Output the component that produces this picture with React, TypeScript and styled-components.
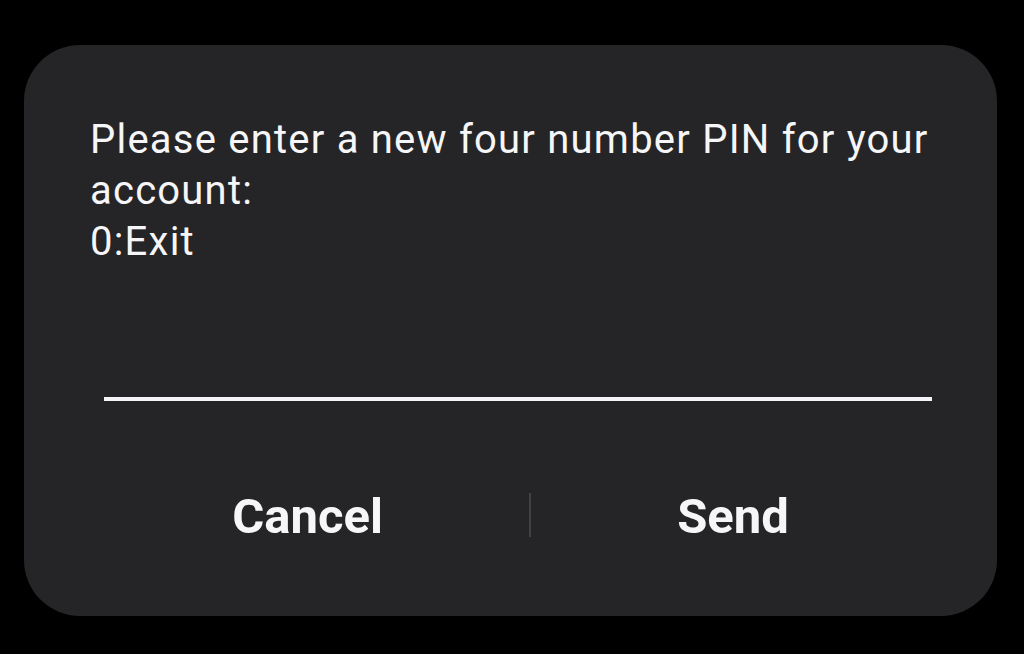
import React from "react";
import styled, { createGlobalStyle } from "styled-components";

const GlobalStyle = createGlobalStyle`
  html, body {
    margin: 0;
    padding: 0;
    background: #000;
  }
  body {
    width: 1024px;
    height: 654px;
    overflow: hidden;
    font-family: Roboto, "Noto Sans", sans-serif;
  }
`;

const App = () => {
  return (
    <Screen>
      <GlobalStyle />
      <Dialog>
        <Message>
          Please enter a new four number PIN for your account:
          <br />
          0:Exit
        </Message>
        <Field>
          <Input type="text" />
        </Field>
        <Actions>
          <ActionButton>Cancel</ActionButton>
          <Divider />
          <ActionButton>Send</ActionButton>
        </Actions>
      </Dialog>
    </Screen>
  );
};

export default App;

const Screen = styled.div`
  width: 1024px;
  height: 654px;
  padding: 45px 27px 38px 24px;
  box-sizing: border-box;
  display: flex;
`;

const Dialog = styled.div`
  flex: 1;
  background-color: #252527;
  border-radius: 56px;
  display: flex;
  flex-direction: column;
  padding-top: 69px;
`;

const Message = styled.p`
  margin: 0 30px 0 66px;
  color: #f6f6f8;
  font-size: 40px;
  line-height: 51px;
  letter-spacing: 1.22px;
  font-weight: 400;
`;

const Field = styled.div`
  margin: 0 65px 0 80px;
  padding-top: 130px;
`;

const Input = styled.input`
  display: block;
  width: 100%;
  box-sizing: border-box;
  background: transparent;
  border: none;
  border-bottom: 4px solid #f4f4f8;
  outline: none;
  height: 4px;
  padding: 0;
`;

const Actions = styled.div`
  display: grid;
  grid-template-columns: 443px 2px 404px;
  align-items: center;
  margin-top: 92px;
  padding-left: 62px;
`;

const ActionButton = styled.button`
  background: none;
  border: none;
  color: #f6f6f8;
  font-family: Roboto, "Noto Sans", sans-serif;
  font-size: 49px;
  line-height: 44px;
  font-weight: 700;
  padding: 2px 0 0 0;
  height: 44px;
  cursor: pointer;
`;

const Divider = styled.div`
  width: 2px;
  height: 44px;
  background-color: #424245;
`;
